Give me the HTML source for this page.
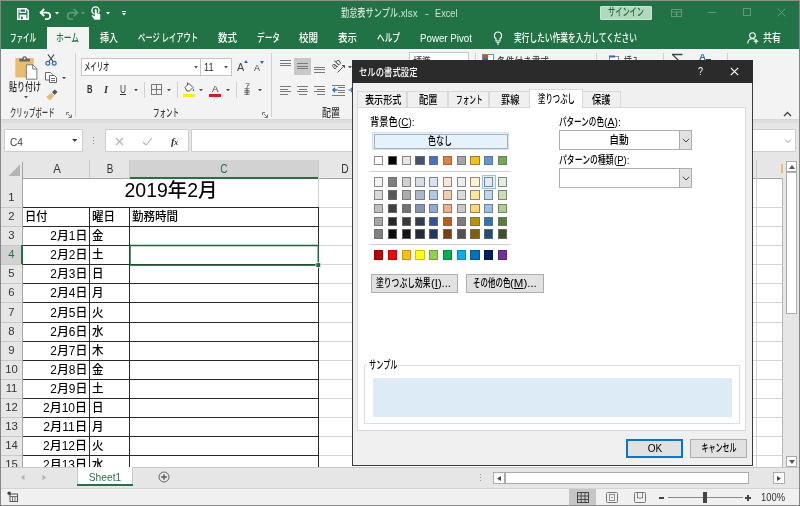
<!DOCTYPE html>
<html lang="ja"><head><meta charset="utf-8"><title>勤怠表サンプル.xlsx - Excel</title>
<style>
html,body{margin:0;padding:0;}
body{width:800px;height:506px;overflow:hidden;position:relative;background:#e6e6e6;font-family:"Liberation Sans","Noto Sans CJK JP",sans-serif;}
#root{position:absolute;left:0;top:0;width:800px;height:506px;overflow:hidden;will-change:transform;}
.b{position:absolute;display:block;margin:0;padding:0;}
.t{position:absolute;white-space:nowrap;display:block;}
.t u{text-decoration:underline;}
</style></head><body><div id="root">
<div class="b " style="left:0px;top:0px;width:800px;height:49px;background:#217346;"></div>
<div class="b " style="left:47px;top:27px;width:42px;height:23px;background:#f3f3f3;"></div>
<div class="b " style="left:0px;top:49px;width:800px;height:71px;background:#f3f3f3;"></div>
<div class="b " style="left:0px;top:119px;width:800px;height:1px;background:#d6d6d6;"></div>
<div class="b " style="left:0px;top:120px;width:800px;height:40px;background:#e6e6e6;"></div>
<div class="b " style="left:0px;top:120px;width:800px;height:3px;background:#dedede;"></div>
<span class="t" id="t1" style="font-size:11px;line-height:15px;color:#cfe0d5;top:6px;font-weight:500;left:341.2px;transform-origin:0 50%;transform:scaleX(0.7434);">勤怠表サンプル</span>
<span class="t" id="t2" style="font-size:10.5px;line-height:14.5px;color:#cfe0d5;top:6.25px;font-weight:500;left:398.3px;transform-origin:0 50%;transform:scaleX(0.9286);">.xlsx</span>
<span class="t" id="t3" style="font-size:10.5px;line-height:14.5px;color:#cfe0d5;top:6.25px;font-weight:500;left:425px;transform-origin:0 50%;transform:scaleX(1.0857);">-</span>
<span class="t" id="t4" style="font-size:10.5px;line-height:14.5px;color:#cfe0d5;top:6.25px;font-weight:500;left:435px;transform-origin:0 50%;transform:scaleX(0.8759);">Excel</span>
<div class="b " style="left:600px;top:5.5px;width:52px;height:14.5px;background:#b2d9c0;border:1px solid #c9e6d3;border-radius:1px;box-sizing:border-box;"></div>
<span class="t" id="t5" style="font-size:11px;line-height:15px;color:#1e6b41;top:5.3px;font-weight:500;left:607.8px;transform-origin:0 50%;transform:scaleX(0.6545);">サインイン</span>
<svg class="b" style="left:670px;top:7.5px;" width="14" height="12" viewBox="0 0 14 12"><rect x="1.5" y="1.5" width="10" height="7" fill="none" stroke="#5d9b79"/><path d="M1.5 4h10M6.5 4v4.5M4.8 6.6l1.7-1.4 1.7 1.4" fill="none" stroke="#5d9b79"/></svg>
<div class="b " style="left:708px;top:12px;width:8px;height:1px;background:#5d9b79;"></div>
<div class="b " style="left:743px;top:8px;width:8px;height:8px;border:1px solid #5d9b79;box-sizing:border-box;"></div>
<svg class="b" style="left:777px;top:8px;" width="9" height="9" viewBox="0 0 9 9"><path d="M0.5 0.5L8.5 8.5M8.5 0.5L0.5 8.5" stroke="#5d9b79" fill="none"/></svg>
<svg class="b" style="left:16.5px;top:7.5px;" width="12" height="12" viewBox="0 0 12 12"><path d="M0.8 0.8h8.4L11.2 2.8V11.2H0.8z" fill="none" stroke="#fff" stroke-width="1.5"/><path d="M3 1v3.3h5.5V1" fill="none" stroke="#fff" stroke-width="1.2"/><rect x="2.6" y="6.6" width="6.8" height="4.6" fill="#fff"/><rect x="4" y="8.6" width="1.8" height="2.6" fill="#217346"/></svg>
<svg class="b" style="left:39px;top:7.5px;" width="14" height="12" viewBox="0 0 14 12"><path d="M5.2 1L1.5 4.6L5.2 8.2M1.8 4.6H8a3.3 3.3 0 0 1 0 6.6H6" fill="none" stroke="#fff" stroke-width="1.8" stroke-linejoin="round"/></svg>
<svg class="b" style="left:54.5px;top:12.25px;" width="4" height="2.5" viewBox="0 0 4 2.5"><path d="M0 0H4 L2 2.5Z" fill="#fff"/></svg>
<svg class="b" style="left:65px;top:7.5px;" width="14" height="12" viewBox="0 0 14 12"><path d="M8.8 1L12.5 4.6L8.8 8.2M12.2 4.6H6a3.3 3.3 0 0 0 0 6.6H8" fill="none" stroke="#5d9b79" stroke-width="1.6" stroke-linejoin="round"/></svg>
<svg class="b" style="left:80.5px;top:12.25px;" width="4" height="2.5" viewBox="0 0 4 2.5"><path d="M0 0H4 L2 2.5Z" fill="#5d9b79"/></svg>
<svg class="b" style="left:90px;top:6px;" width="12" height="15" viewBox="0 0 12 15"><circle cx="5.5" cy="4.5" r="3.6" fill="none" stroke="#fff" stroke-width="1.4"/><path d="M4.5 4v6l-2-1.2-1 1.2 3 4h6v-6l-3.5-1V4a1 1 0 0 0-2.5 0z" fill="#fff" stroke="#217346" stroke-width="0.6"/></svg>
<svg class="b" style="left:105.5px;top:12.25px;" width="4" height="2.5" viewBox="0 0 4 2.5"><path d="M0 0H4 L2 2.5Z" fill="#fff"/></svg>
<div class="b " style="left:122px;top:11px;width:4px;height:1px;background:#fff;"></div>
<svg class="b" style="left:122px;top:13.05px;" width="4" height="2.5" viewBox="0 0 4 2.5"><path d="M0 0H4 L2 2.5Z" fill="#fff"/></svg>
<span class="t" id="t6" style="font-size:11px;line-height:15px;color:#fff;top:31.1px;font-weight:500;left:10px;transform-origin:0 50%;transform:scaleX(0.5909);">ファイル</span>
<span class="t" id="t7" style="font-size:11px;line-height:15px;color:#217346;top:31.1px;font-weight:500;left:56px;transform-origin:0 50%;transform:scaleX(0.7040);">ホーム</span>
<span class="t" id="t8" style="font-size:11px;line-height:15px;color:#fff;top:31.1px;font-weight:500;left:100px;transform-origin:0 50%;transform:scaleX(0.8182);">挿入</span>
<span class="t" id="t9" style="font-size:11px;line-height:15px;color:#fff;top:31.1px;font-weight:500;left:138px;transform-origin:0 50%;transform:scaleX(0.6605);">ページ レイアウト</span>
<span class="t" id="t10" style="font-size:11px;line-height:15px;color:#fff;top:31.1px;font-weight:500;left:218px;transform-origin:0 50%;transform:scaleX(0.8636);">数式</span>
<span class="t" id="t11" style="font-size:11px;line-height:15px;color:#fff;top:31.1px;font-weight:500;left:257px;transform-origin:0 50%;transform:scaleX(0.6970);">データ</span>
<span class="t" id="t12" style="font-size:11px;line-height:15px;color:#fff;top:31.1px;font-weight:500;left:299px;transform-origin:0 50%;transform:scaleX(0.8636);">校閲</span>
<span class="t" id="t13" style="font-size:11px;line-height:15px;color:#fff;top:31.1px;font-weight:500;left:338px;transform-origin:0 50%;transform:scaleX(0.8636);">表示</span>
<span class="t" id="t14" style="font-size:11px;line-height:15px;color:#fff;top:31.1px;font-weight:500;left:377px;transform-origin:0 50%;transform:scaleX(0.6970);">ヘルプ</span>
<span class="t" id="t15" style="font-size:11px;line-height:15px;color:#fff;top:31.1px;font-weight:500;left:420px;transform-origin:0 50%;transform:scaleX(0.8858);">Power Pivot</span>
<span class="t" id="t16" style="font-size:11px;line-height:15px;color:#fff;top:31.1px;font-weight:500;left:514px;transform-origin:0 50%;transform:scaleX(0.7015);">実行したい作業を入力してください</span>
<span class="t" id="t17" style="font-size:11px;line-height:15px;color:#fff;top:31.1px;font-weight:500;left:763px;transform-origin:0 50%;transform:scaleX(0.8182);">共有</span>
<svg class="b" style="left:493px;top:31px;" width="10" height="14" viewBox="0 0 10 14"><path d="M5 1a3.6 3.6 0 0 0-2 6.6V10h4V7.6A3.6 3.6 0 0 0 5 1z" fill="none" stroke="#fff" stroke-width="1.1"/><path d="M3.5 11.5h3M4 13h2" stroke="#fff" stroke-width="1"/></svg>
<svg class="b" style="left:747px;top:32px;" width="12" height="12" viewBox="0 0 12 12"><circle cx="5.5" cy="3.5" r="2.8" fill="none" stroke="#fff" stroke-width="1.1"/><path d="M0.8 11.5c0-3 2-4.8 4.7-4.8 1 0 1.8.2 2.4.6" fill="none" stroke="#fff" stroke-width="1.1"/><path d="M9 7v4.5M6.8 9.2h4.4" stroke="#fff" stroke-width="1.2"/></svg>
<svg class="b" style="left:14px;top:54.5px;" width="25" height="25" viewBox="0 0 25 25"><rect x="1.3" y="3" width="18.5" height="19.5" rx="1" fill="#e9bd6e"/><path d="M5.2 6.6V3.8h3a2.4 2.6 0 0 1 4.8 0h3v2.8z" fill="#666"/><circle cx="10.6" cy="3.4" r="0.9" fill="#f3f3f3"/><path d="M12.3 9.8h6.6l4 4v10.4h-10.6z" fill="#fff" stroke="#7a7a7a" stroke-width="1"/><path d="M18.7 9.8v4.2h4.2" fill="none" stroke="#7a7a7a" stroke-width="1"/></svg>
<span class="t" id="t18" style="font-size:11px;line-height:15px;color:#262626;top:79.5px;font-weight:500;left:8.5px;transform-origin:0 50%;transform:scaleX(0.7273);">貼り付け</span>
<svg class="b" style="left:24px;top:96.25px;" width="4" height="2.5" viewBox="0 0 4 2.5"><path d="M0 0H4 L2 2.5Z" fill="#555"/></svg>
<svg class="b" style="left:45px;top:54px;" width="12" height="12" viewBox="0 0 12 12"><path d="M3 0.5L8.5 8M9 0.5L3.5 8" stroke="#444" stroke-width="1.2" fill="none"/><circle cx="2.8" cy="9.3" r="1.9" fill="none" stroke="#2b6cb8" stroke-width="1.2"/><circle cx="9.2" cy="9.3" r="1.9" fill="none" stroke="#2b6cb8" stroke-width="1.2"/></svg>
<svg class="b" style="left:45px;top:72px;" width="13" height="11" viewBox="0 0 13 11"><path d="M0.5 0.5h5l2 2V8h-7z" fill="#fff" stroke="#666"/><path d="M4.5 3.5h5l2 2v5h-7z" fill="#fff" stroke="#666"/><path d="M6 6.5h4M6 8.5h4" stroke="#2b6cb8" stroke-width="0.9"/></svg>
<svg class="b" style="left:62px;top:76.75px;" width="4" height="2.5" viewBox="0 0 4 2.5"><path d="M0 0H4 L2 2.5Z" fill="#555"/></svg>
<svg class="b" style="left:45px;top:89px;" width="13" height="12" viewBox="0 0 13 12"><path d="M7 3l3-2.5 2.5 2.5-3 3z" fill="#555"/><path d="M1 8l5.5-4.5 3 3L5 11.5z" fill="#e9bd6e"/><path d="M6.5 3.5l3 3" stroke="#fff" stroke-width="0.8"/></svg>
<span class="t" id="t19" style="font-size:11px;line-height:15px;color:#3a3a3a;top:106.3px;font-weight:500;left:9.5px;transform-origin:0 50%;transform:scaleX(0.5779);">クリップボード</span>
<svg class="b" style="left:66px;top:112px;" width="6" height="6" viewBox="0 0 6 6"><path d="M0.5 3V0.5H3M2 2l3 3M5.5 2.5v3h-3" fill="none" stroke="#777" stroke-width="1"/></svg>
<div class="b " style="left:75px;top:53px;width:1px;height:64px;background:#d0d0d0;"></div>
<div class="b " style="left:81px;top:58px;width:120px;height:18px;background:#fff;border:1px solid #c6c6c6;box-sizing:border-box;"></div>
<div class="b " style="left:201px;top:58px;width:31px;height:18px;background:#fff;border:1px solid #c6c6c6;box-sizing:border-box;border-left:none;"></div>
<span class="t" id="t20" style="font-size:11px;line-height:15px;color:#262626;top:59.5px;font-weight:500;left:84px;transform-origin:0 50%;transform:scaleX(0.5795);">メイリオ</span>
<svg class="b" style="left:193.5px;top:66.25px;" width="4" height="2.5" viewBox="0 0 4 2.5"><path d="M0 0H4 L2 2.5Z" fill="#555"/></svg>
<span class="t" id="t21" style="font-size:11px;line-height:15px;color:#262626;top:59.5px;font-weight:500;left:204px;transform-origin:0 50%;transform:scaleX(0.8317);">11</span>
<svg class="b" style="left:224px;top:66.25px;" width="4" height="2.5" viewBox="0 0 4 2.5"><path d="M0 0H4 L2 2.5Z" fill="#555"/></svg>
<span class="t" id="t22" style="font-size:10.5px;line-height:14.5px;color:#444;top:60.25px;font-weight:500;left:236.5px;transform-origin:0 50%;transform:scaleX(1.0263);">A</span>
<svg class="b" style="left:244px;top:60px;" width="4" height="3" viewBox="0 0 4 3"><path d="M0 3L2 0L4 3z" fill="#2b6cb8"/></svg>
<span class="t" id="t23" style="font-size:8.8px;line-height:12.8px;color:#444;top:61.8px;font-weight:500;left:254px;transform-origin:0 50%;transform:scaleX(1.0213);">A</span>
<svg class="b" style="left:260px;top:61px;" width="4" height="3" viewBox="0 0 4 3"><path d="M0 0L2 3L4 0z" fill="#2b6cb8"/></svg>
<span class="t" id="t24" style="font-size:10px;line-height:14px;color:#333;top:82.6px;font-weight:bold;left:86.8px;transform-origin:0 50%;transform:scaleX(0.7603);">B</span>
<span class="t" id="t25" style="font-size:10px;line-height:14px;color:#333;top:82.6px;font-weight:bold;left:103.5px;transform-origin:0 50%;transform:scaleX(1.0240);font-style:italic;font-family:'Liberation Serif',serif;">I</span>
<span class="t" id="t26" style="font-size:10px;line-height:14px;color:#333;top:82.6px;font-weight:normal;left:120.2px;transform-origin:0 50%;transform:scaleX(0.8294);text-decoration:underline;">U</span>
<svg class="b" style="left:133.5px;top:88.75px;" width="4" height="2.5" viewBox="0 0 4 2.5"><path d="M0 0H4 L2 2.5Z" fill="#555"/></svg>
<div class="b " style="left:144px;top:82px;width:1px;height:16px;background:#d0d0d0;"></div>
<svg class="b" style="left:150.5px;top:84px;" width="11" height="11" viewBox="0 0 11 11"><rect x="0.5" y="0.5" width="10" height="10" fill="none" stroke="#7a7a7a"/><path d="M5.5 0.5v10M0.5 5.5h10" stroke="#7a7a7a"/></svg>
<svg class="b" style="left:167px;top:88.75px;" width="4" height="2.5" viewBox="0 0 4 2.5"><path d="M0 0H4 L2 2.5Z" fill="#555"/></svg>
<div class="b " style="left:177px;top:82px;width:1px;height:16px;background:#d0d0d0;"></div>
<svg class="b" style="left:183px;top:82px;" width="12" height="11" viewBox="0 0 12 11"><path d="M2 5.5L6 1.5l4 4-3.5 3.5H4z" fill="#fff" stroke="#555" stroke-width="1"/><path d="M4.5 3L4.5 0.5" stroke="#555"/><path d="M10.5 6.5c1 1.4 1 2.3 0 2.8-1-.5-1-1.4 0-2.8z" fill="#2b6cb8"/></svg>
<div class="b " style="left:183px;top:94px;width:12px;height:3px;background:#ffee00;"></div>
<svg class="b" style="left:199px;top:88.75px;" width="4" height="2.5" viewBox="0 0 4 2.5"><path d="M0 0H4 L2 2.5Z" fill="#555"/></svg>
<span class="t" id="t27" style="font-size:9.5px;line-height:13.5px;color:#444;top:81.85px;font-weight:500;left:211.8px;transform-origin:0 50%;transform:scaleX(1.0246);">A</span>
<div class="b " style="left:209px;top:94px;width:12px;height:3px;background:#e81123;"></div>
<svg class="b" style="left:226px;top:88.75px;" width="4" height="2.5" viewBox="0 0 4 2.5"><path d="M0 0H4 L2 2.5Z" fill="#555"/></svg>
<div class="b " style="left:236px;top:82px;width:1px;height:16px;background:#d0d0d0;"></div>
<span class="t" id="t28" style="font-size:5.5px;line-height:9.5px;color:#444;top:81.75px;font-weight:500;left:244.5px;transform-origin:0 50%;transform:scaleX(0.9065);">ア</span>
<span class="t" id="t29" style="font-size:6.5px;line-height:10.5px;color:#444;top:87.25px;font-weight:500;left:244px;transform-origin:0 50%;transform:scaleX(0.9231);">亜</span>
<svg class="b" style="left:258px;top:88.75px;" width="4" height="2.5" viewBox="0 0 4 2.5"><path d="M0 0H4 L2 2.5Z" fill="#555"/></svg>
<span class="t" id="t30" style="font-size:11px;line-height:15px;color:#3a3a3a;top:106.3px;font-weight:500;left:153px;transform-origin:0 50%;transform:scaleX(0.5909);">フォント</span>
<svg class="b" style="left:262px;top:112px;" width="6" height="6" viewBox="0 0 6 6"><path d="M0.5 3V0.5H3M2 2l3 3M5.5 2.5v3h-3" fill="none" stroke="#777" stroke-width="1"/></svg>
<div class="b " style="left:271px;top:53px;width:1px;height:64px;background:#d0d0d0;"></div>
<div class="b " style="left:280px;top:60px;width:11px;height:1px;background:#7a7a7a;"></div>
<div class="b " style="left:280px;top:62.6px;width:11px;height:1px;background:#7a7a7a;"></div>
<div class="b " style="left:280px;top:65.2px;width:11px;height:1px;background:#7a7a7a;"></div>
<div class="b " style="left:294px;top:58px;width:17px;height:17px;background:#c8c8c8;"></div>
<div class="b " style="left:297px;top:63.3px;width:11px;height:1px;background:#7a7a7a;"></div>
<div class="b " style="left:297px;top:65.8px;width:11px;height:1px;background:#7a7a7a;"></div>
<div class="b " style="left:297px;top:68.3px;width:11px;height:1px;background:#7a7a7a;"></div>
<div class="b " style="left:314px;top:66.7px;width:11px;height:1px;background:#7a7a7a;"></div>
<div class="b " style="left:314px;top:69.3px;width:11px;height:1px;background:#7a7a7a;"></div>
<div class="b " style="left:314px;top:71.9px;width:11px;height:1px;background:#7a7a7a;"></div>
<span class="t" style="left:331px;top:57.5px;font-size:9px;line-height:12px;color:#333;transform:rotate(-45deg);transform-origin:50% 50%;">ab</span>
<svg class="b" style="left:336.5px;top:63.5px;" width="9" height="9" viewBox="0 0 9 9"><path d="M0.5 8.5L7.5 1.5M7.5 1.5H5M7.5 1.5V4" stroke="#555" fill="none"/></svg>
<svg class="b" style="left:347.5px;top:65.75px;" width="4" height="2.5" viewBox="0 0 4 2.5"><path d="M0 0H4 L2 2.5Z" fill="#555"/></svg>
<div class="b " style="left:280px;top:86px;width:11px;height:1px;background:#7a7a7a;"></div>
<div class="b " style="left:280px;top:88.5px;width:8px;height:1px;background:#7a7a7a;"></div>
<div class="b " style="left:280px;top:91px;width:11px;height:1px;background:#7a7a7a;"></div>
<div class="b " style="left:280px;top:93.5px;width:8px;height:1px;background:#7a7a7a;"></div>
<div class="b " style="left:297px;top:86px;width:11px;height:1px;background:#7a7a7a;"></div>
<div class="b " style="left:298.5px;top:88.5px;width:8px;height:1px;background:#7a7a7a;"></div>
<div class="b " style="left:297px;top:91px;width:11px;height:1px;background:#7a7a7a;"></div>
<div class="b " style="left:298.5px;top:93.5px;width:8px;height:1px;background:#7a7a7a;"></div>
<div class="b " style="left:314px;top:86px;width:11px;height:1px;background:#7a7a7a;"></div>
<div class="b " style="left:317px;top:88.5px;width:8px;height:1px;background:#7a7a7a;"></div>
<div class="b " style="left:314px;top:91px;width:11px;height:1px;background:#7a7a7a;"></div>
<div class="b " style="left:317px;top:93.5px;width:8px;height:1px;background:#7a7a7a;"></div>
<div class="b " style="left:332px;top:84.5px;width:13px;height:1px;background:#7a7a7a;"></div>
<div class="b " style="left:338px;top:87.1px;width:7px;height:1px;background:#7a7a7a;"></div>
<div class="b " style="left:338px;top:89.7px;width:7px;height:1px;background:#7a7a7a;"></div>
<div class="b " style="left:338px;top:92.3px;width:7px;height:1px;background:#7a7a7a;"></div>
<div class="b " style="left:332px;top:94.9px;width:13px;height:1px;background:#7a7a7a;"></div>
<svg class="b" style="left:332px;top:87px;" width="6" height="6" viewBox="0 0 6 6"><path d="M5.5 3H1M3 0.8L0.8 3l2.2 2.2" stroke="#2b6cb8" stroke-width="1.3" fill="none"/></svg>
<svg class="b" style="left:348px;top:87px;" width="6" height="6" viewBox="0 0 6 6"><path d="M0.5 3H5M3 1l2 2-2 2" stroke="#2b6cb8" stroke-width="1.2" fill="none"/></svg>
<span class="t" id="t31" style="font-size:11px;line-height:15px;color:#3a3a3a;top:106.3px;font-weight:500;left:322px;transform-origin:0 50%;transform:scaleX(0.8182);">配置</span>
<div class="b " style="left:409px;top:52px;width:60px;height:12px;background:#fff;border:1px solid #c6c6c6;box-sizing:border-box;"></div>
<span class="t" id="t32" style="font-size:11px;line-height:15px;color:#444;top:54.5px;font-weight:500;left:413px;transform-origin:0 50%;transform:scaleX(0.8182);">標準</span>
<div class="b " style="left:475px;top:53px;width:1px;height:11px;background:#d0d0d0;"></div>
<svg class="b" style="left:482px;top:54px;" width="12" height="8" viewBox="0 0 12 8"><rect x="0.5" y="0.5" width="11" height="9" fill="#fff" stroke="#888"/><rect x="1" y="1" width="5" height="3" fill="#d9482b"/><rect x="1" y="4" width="5" height="4" fill="#2b6cb8"/></svg>
<span class="t" id="t33" style="font-size:11px;line-height:15px;color:#444;top:54.5px;font-weight:500;left:497px;transform-origin:0 50%;transform:scaleX(0.7879);">条件付き書式</span>
<div class="b " style="left:596px;top:53px;width:1px;height:11px;background:#d0d0d0;"></div>
<svg class="b" style="left:609px;top:54px;" width="12" height="8" viewBox="0 0 12 8"><rect x="0.5" y="2.5" width="9" height="8" fill="#fff" stroke="#888"/><path d="M0 2.5h6" stroke="#2b6cb8" stroke-width="2"/></svg>
<span class="t" id="t34" style="font-size:11px;line-height:15px;color:#444;top:54.5px;font-weight:500;left:624px;transform-origin:0 50%;transform:scaleX(0.7273);">挿入</span>
<div class="b " style="left:663px;top:53px;width:1px;height:11px;background:#d0d0d0;"></div>
<svg class="b" style="left:671px;top:53px;" width="13" height="8" viewBox="0 0 13 8"><path d="M1 1.5h10.5M1.5 1.5L9 9" stroke="#444" stroke-width="1.3" fill="none"/></svg>
<span class="t" id="t35" style="font-size:9px;line-height:13px;color:#2b6cb8;top:51px;font-weight:bold;left:699px;transform-origin:0 50%;transform:scaleX(1.0769);">A</span>
<div class="b " style="left:706px;top:59px;width:5px;height:1px;background:#444;"></div>
<div class="b " style="left:727px;top:53px;width:1px;height:11px;background:#d0d0d0;"></div>
<svg class="b" style="left:783px;top:111px;" width="9" height="6" viewBox="0 0 9 6"><path d="M1 5L4.5 1.5L8 5" stroke="#444" stroke-width="1.4" fill="none"/></svg>
<div class="b " style="left:4px;top:129px;width:78.5px;height:23.4px;background:#fff;border:1px solid #cdcdcd;box-sizing:border-box;border-radius:1px;"></div>
<span class="t" id="t36" style="font-size:10.5px;line-height:14.5px;color:#444;top:135.05px;font-weight:500;left:10px;transform-origin:0 50%;transform:scaleX(0.9674);">C4</span>
<svg class="b" style="left:71.7px;top:138.8px;" width="5.4" height="3" viewBox="0 0 5.4 3"><path d="M0 0H5.4 L2.7 3Z" fill="#444"/></svg>
<div class="b " style="left:93.3px;top:137px;width:1px;height:1px;background:#8a8a8a;"></div>
<div class="b " style="left:93.3px;top:140px;width:1px;height:1px;background:#8a8a8a;"></div>
<div class="b " style="left:93.3px;top:143px;width:1px;height:1px;background:#8a8a8a;"></div>
<div class="b " style="left:105.3px;top:129px;width:83.7px;height:23.4px;background:#fff;border:1px solid #cdcdcd;box-sizing:border-box;border-radius:1px;"></div>
<svg class="b" style="left:115px;top:137px;" width="9" height="9" viewBox="0 0 9 9"><path d="M1 1L8 8M8 1L1 8" stroke="#b0b0b0" stroke-width="1.1" fill="none"/></svg>
<svg class="b" style="left:142px;top:137px;" width="11" height="9" viewBox="0 0 11 9"><path d="M1 5L4 8L10 1" stroke="#b0b0b0" stroke-width="1.1" fill="none"/></svg>
<span class="t" id="t37" style="font-size:11px;line-height:15px;color:#333;top:133.5px;font-weight:bold;left:171px;transform-origin:0 50%;transform:scaleX(0.9804);font-style:italic;font-family:'Liberation Serif',serif;">f</span>
<span class="t" id="t38" style="font-size:8px;line-height:12px;color:#333;top:136.8px;font-weight:bold;left:174.3px;transform-origin:0 50%;font-style:italic;font-family:'Liberation Serif',serif;">x</span>
<div class="b " style="left:191px;top:129px;width:604.5px;height:23.4px;background:#fff;border:1px solid #cdcdcd;box-sizing:border-box;border-radius:1px;"></div>
<svg class="b" style="left:784px;top:138px;" width="8" height="6" viewBox="0 0 8 6"><path d="M1 1.5L4 4.5L7 1.5" stroke="#999" stroke-width="1" fill="none"/></svg>
<div class="b " style="left:0px;top:160px;width:783px;height:307px;background:#fff;"></div>
<div class="b " style="left:0px;top:160px;width:800px;height:18px;background:#e6e6e6;"></div>
<div class="b " style="left:0px;top:178px;width:783px;height:1px;background:#a6a6a6;"></div>
<div class="b " style="left:0px;top:160px;width:22px;height:307px;background:#e6e6e6;"></div>
<div class="b " style="left:22px;top:162px;width:1px;height:305px;background:#a6a6a6;"></div>
<svg class="b" style="left:7.5px;top:163.5px;" width="12.5" height="12.5" viewBox="0 0 12.5 12.5"><path d="M12.5 0V12.5H0z" fill="#b4b4b4"/></svg>
<div class="b " style="left:130px;top:160px;width:188px;height:18px;background:#d2d2d2;"></div>
<div class="b " style="left:130px;top:177.3px;width:188px;height:1.7px;background:#217346;"></div>
<div class="b " style="left:89px;top:160px;width:1px;height:18px;background:#c8c8c8;"></div>
<div class="b " style="left:129px;top:160px;width:1px;height:18px;background:#c8c8c8;"></div>
<div class="b " style="left:318px;top:160px;width:1px;height:18px;background:#c8c8c8;"></div>
<div class="b " style="left:756px;top:160px;width:1px;height:18px;background:#c8c8c8;"></div>
<span class="t" id="t39" style="font-size:12px;line-height:16px;color:#333;top:160.8px;font-weight:500;left:56.8px;transform-origin:0 50%;transform:translateX(-50%) scaleX(0.9481);transform-origin:50% 50%;">A</span>
<span class="t" id="t40" style="font-size:12px;line-height:16px;color:#333;top:160.8px;font-weight:500;left:109.5px;transform-origin:0 50%;transform:translateX(-50%) scaleX(0.8234);transform-origin:50% 50%;">B</span>
<span class="t" id="t41" style="font-size:12px;line-height:16px;color:#217346;top:160.8px;font-weight:500;left:224px;transform-origin:0 50%;transform:translateX(-50%) scaleX(0.8533);transform-origin:50% 50%;">C</span>
<span class="t" id="t42" style="font-size:12px;line-height:16px;color:#333;top:160.8px;font-weight:500;left:345px;transform-origin:0 50%;transform:translateX(-50%) scaleX(0.8533);transform-origin:50% 50%;">D</span>
<div class="b " style="left:23px;top:207px;width:759px;height:1px;background:#d4d4d4;"></div>
<div class="b " style="left:23px;top:226px;width:759px;height:1px;background:#d4d4d4;"></div>
<div class="b " style="left:23px;top:245px;width:759px;height:1px;background:#d4d4d4;"></div>
<div class="b " style="left:23px;top:264px;width:759px;height:1px;background:#d4d4d4;"></div>
<div class="b " style="left:23px;top:283px;width:759px;height:1px;background:#d4d4d4;"></div>
<div class="b " style="left:23px;top:302px;width:759px;height:1px;background:#d4d4d4;"></div>
<div class="b " style="left:23px;top:322px;width:759px;height:1px;background:#d4d4d4;"></div>
<div class="b " style="left:23px;top:341px;width:759px;height:1px;background:#d4d4d4;"></div>
<div class="b " style="left:23px;top:360px;width:759px;height:1px;background:#d4d4d4;"></div>
<div class="b " style="left:23px;top:379px;width:759px;height:1px;background:#d4d4d4;"></div>
<div class="b " style="left:23px;top:398px;width:759px;height:1px;background:#d4d4d4;"></div>
<div class="b " style="left:23px;top:417px;width:759px;height:1px;background:#d4d4d4;"></div>
<div class="b " style="left:23px;top:436px;width:759px;height:1px;background:#d4d4d4;"></div>
<div class="b " style="left:23px;top:455px;width:759px;height:1px;background:#d4d4d4;"></div>
<div class="b " style="left:318px;top:178px;width:1px;height:289px;background:#d4d4d4;"></div>
<div class="b " style="left:756px;top:178px;width:1px;height:289px;background:#d4d4d4;"></div>
<div class="b " style="left:0px;top:207px;width:22px;height:1px;background:#c8c8c8;"></div>
<span class="t" id="t43" style="font-size:11.3px;line-height:15.3px;color:#333;top:189.85px;font-weight:500;left:11.5px;transform-origin:0 50%;transform:translateX(-50%);">1</span>
<div class="b " style="left:0px;top:226px;width:22px;height:1px;background:#c8c8c8;"></div>
<span class="t" id="t44" style="font-size:11.3px;line-height:15.3px;color:#333;top:209.35px;font-weight:500;left:11.5px;transform-origin:0 50%;transform:translateX(-50%);">2</span>
<div class="b " style="left:0px;top:245px;width:22px;height:1px;background:#c8c8c8;"></div>
<span class="t" id="t45" style="font-size:11.3px;line-height:15.3px;color:#333;top:228.35px;font-weight:500;left:11.5px;transform-origin:0 50%;transform:translateX(-50%);">3</span>
<div class="b " style="left:0px;top:246px;width:22px;height:18px;background:#d2d2d2;"></div>
<div class="b " style="left:21px;top:245px;width:2px;height:20px;background:#217346;"></div>
<div class="b " style="left:0px;top:264px;width:22px;height:1px;background:#c8c8c8;"></div>
<span class="t" id="t46" style="font-size:11.3px;line-height:15.3px;color:#217346;top:247.35px;font-weight:500;left:11.5px;transform-origin:0 50%;transform:translateX(-50%);">4</span>
<div class="b " style="left:0px;top:283px;width:22px;height:1px;background:#c8c8c8;"></div>
<span class="t" id="t47" style="font-size:11.3px;line-height:15.3px;color:#333;top:266.35px;font-weight:500;left:11.5px;transform-origin:0 50%;transform:translateX(-50%);">5</span>
<div class="b " style="left:0px;top:302px;width:22px;height:1px;background:#c8c8c8;"></div>
<span class="t" id="t48" style="font-size:11.3px;line-height:15.3px;color:#333;top:285.35px;font-weight:500;left:11.5px;transform-origin:0 50%;transform:translateX(-50%);">6</span>
<div class="b " style="left:0px;top:322px;width:22px;height:1px;background:#c8c8c8;"></div>
<span class="t" id="t49" style="font-size:11.3px;line-height:15.3px;color:#333;top:305.35px;font-weight:500;left:11.5px;transform-origin:0 50%;transform:translateX(-50%);">7</span>
<div class="b " style="left:0px;top:341px;width:22px;height:1px;background:#c8c8c8;"></div>
<span class="t" id="t50" style="font-size:11.3px;line-height:15.3px;color:#333;top:324.35px;font-weight:500;left:11.5px;transform-origin:0 50%;transform:translateX(-50%);">8</span>
<div class="b " style="left:0px;top:360px;width:22px;height:1px;background:#c8c8c8;"></div>
<span class="t" id="t51" style="font-size:11.3px;line-height:15.3px;color:#333;top:343.35px;font-weight:500;left:11.5px;transform-origin:0 50%;transform:translateX(-50%);">9</span>
<div class="b " style="left:0px;top:379px;width:22px;height:1px;background:#c8c8c8;"></div>
<span class="t" id="t52" style="font-size:11.3px;line-height:15.3px;color:#333;top:362.35px;font-weight:500;left:11.5px;transform-origin:0 50%;transform:translateX(-50%);">10</span>
<div class="b " style="left:0px;top:398px;width:22px;height:1px;background:#c8c8c8;"></div>
<span class="t" id="t53" style="font-size:11.3px;line-height:15.3px;color:#333;top:381.35px;font-weight:500;left:11.5px;transform-origin:0 50%;transform:translateX(-50%);">11</span>
<div class="b " style="left:0px;top:417px;width:22px;height:1px;background:#c8c8c8;"></div>
<span class="t" id="t54" style="font-size:11.3px;line-height:15.3px;color:#333;top:400.35px;font-weight:500;left:11.5px;transform-origin:0 50%;transform:translateX(-50%);">12</span>
<div class="b " style="left:0px;top:436px;width:22px;height:1px;background:#c8c8c8;"></div>
<span class="t" id="t55" style="font-size:11.3px;line-height:15.3px;color:#333;top:419.35px;font-weight:500;left:11.5px;transform-origin:0 50%;transform:translateX(-50%);">13</span>
<div class="b " style="left:0px;top:455px;width:22px;height:1px;background:#c8c8c8;"></div>
<span class="t" id="t56" style="font-size:11.3px;line-height:15.3px;color:#333;top:438.35px;font-weight:500;left:11.5px;transform-origin:0 50%;transform:translateX(-50%);">14</span>
<div class="b " style="left:0px;top:474px;width:22px;height:1px;background:#c8c8c8;"></div>
<span class="t" id="t57" style="font-size:11.3px;line-height:15.3px;color:#333;top:457.35px;font-weight:500;left:11.5px;transform-origin:0 50%;transform:translateX(-50%);">15</span>
<div class="b " style="left:23px;top:207px;width:296px;height:1px;background:#2a2a2a;"></div>
<div class="b " style="left:23px;top:226px;width:296px;height:1px;background:#2a2a2a;"></div>
<div class="b " style="left:23px;top:245px;width:296px;height:1px;background:#2a2a2a;"></div>
<div class="b " style="left:23px;top:264px;width:296px;height:1px;background:#2a2a2a;"></div>
<div class="b " style="left:23px;top:283px;width:296px;height:1px;background:#2a2a2a;"></div>
<div class="b " style="left:23px;top:302px;width:296px;height:1px;background:#2a2a2a;"></div>
<div class="b " style="left:23px;top:322px;width:296px;height:1px;background:#2a2a2a;"></div>
<div class="b " style="left:23px;top:341px;width:296px;height:1px;background:#2a2a2a;"></div>
<div class="b " style="left:23px;top:360px;width:296px;height:1px;background:#2a2a2a;"></div>
<div class="b " style="left:23px;top:379px;width:296px;height:1px;background:#2a2a2a;"></div>
<div class="b " style="left:23px;top:398px;width:296px;height:1px;background:#2a2a2a;"></div>
<div class="b " style="left:23px;top:417px;width:296px;height:1px;background:#2a2a2a;"></div>
<div class="b " style="left:23px;top:436px;width:296px;height:1px;background:#2a2a2a;"></div>
<div class="b " style="left:23px;top:455px;width:296px;height:1px;background:#2a2a2a;"></div>
<div class="b " style="left:89px;top:207px;width:1px;height:260px;background:#2a2a2a;"></div>
<div class="b " style="left:129px;top:207px;width:1px;height:260px;background:#2a2a2a;"></div>
<div class="b " style="left:318px;top:207px;width:1px;height:260px;background:#2a2a2a;"></div>
<span class="t" id="t58" style="font-size:19.5px;line-height:23.5px;color:#000;top:179.25px;font-weight:500;left:170.5px;transform-origin:0 50%;transform:translateX(-50%) scaleX(0.9975);transform-origin:50% 50%;">2019年2月</span>
<span class="t" id="t59" style="font-size:12px;line-height:16px;color:#000;top:209px;font-weight:500;left:24.6px;transform-origin:0 50%;transform:scaleX(0.9369);">日付</span>
<span class="t" id="t60" style="font-size:12px;line-height:16px;color:#000;top:209px;font-weight:500;left:92px;transform-origin:0 50%;transform:scaleX(0.9577);">曜日</span>
<span class="t" id="t61" style="font-size:12px;line-height:16px;color:#000;top:209px;font-weight:500;left:132px;transform-origin:0 50%;transform:scaleX(0.9580);">勤務時間</span>
<span class="t" id="d1" style="font-size:12px;line-height:16px;color:#000;top:228px;font-weight:500;right:712.5px;transform-origin:100% 50%;transform:scaleX(0.9904);">2月1日</span>
<span class="t" id="w1" style="font-size:12px;line-height:16px;color:#000;top:228px;font-weight:500;left:92px;transform-origin:0 50%;transform:scaleX(0.9571);">金</span>
<span class="t" id="d2" style="font-size:12px;line-height:16px;color:#000;top:247px;font-weight:500;right:712.5px;transform-origin:100% 50%;transform:scaleX(0.9904);">2月2日</span>
<span class="t" id="w2" style="font-size:12px;line-height:16px;color:#000;top:247px;font-weight:500;left:92px;transform-origin:0 50%;transform:scaleX(0.9571);">土</span>
<span class="t" id="d3" style="font-size:12px;line-height:16px;color:#000;top:266px;font-weight:500;right:712.5px;transform-origin:100% 50%;transform:scaleX(0.9904);">2月3日</span>
<span class="t" id="w3" style="font-size:12px;line-height:16px;color:#000;top:266px;font-weight:500;left:92px;transform-origin:0 50%;transform:scaleX(0.9571);">日</span>
<span class="t" id="d4" style="font-size:12px;line-height:16px;color:#000;top:285px;font-weight:500;right:712.5px;transform-origin:100% 50%;transform:scaleX(0.9904);">2月4日</span>
<span class="t" id="w4" style="font-size:12px;line-height:16px;color:#000;top:285px;font-weight:500;left:92px;transform-origin:0 50%;transform:scaleX(0.9571);">月</span>
<span class="t" id="d5" style="font-size:12px;line-height:16px;color:#000;top:304.5px;font-weight:500;right:712.5px;transform-origin:100% 50%;transform:scaleX(0.9904);">2月5日</span>
<span class="t" id="w5" style="font-size:12px;line-height:16px;color:#000;top:304.5px;font-weight:500;left:92px;transform-origin:0 50%;transform:scaleX(0.9571);">火</span>
<span class="t" id="d6" style="font-size:12px;line-height:16px;color:#000;top:324px;font-weight:500;right:712.5px;transform-origin:100% 50%;transform:scaleX(0.9904);">2月6日</span>
<span class="t" id="w6" style="font-size:12px;line-height:16px;color:#000;top:324px;font-weight:500;left:92px;transform-origin:0 50%;transform:scaleX(0.9571);">水</span>
<span class="t" id="d7" style="font-size:12px;line-height:16px;color:#000;top:343px;font-weight:500;right:712.5px;transform-origin:100% 50%;transform:scaleX(0.9904);">2月7日</span>
<span class="t" id="w7" style="font-size:12px;line-height:16px;color:#000;top:343px;font-weight:500;left:92px;transform-origin:0 50%;transform:scaleX(0.9571);">木</span>
<span class="t" id="d8" style="font-size:12px;line-height:16px;color:#000;top:362px;font-weight:500;right:712.5px;transform-origin:100% 50%;transform:scaleX(0.9904);">2月8日</span>
<span class="t" id="w8" style="font-size:12px;line-height:16px;color:#000;top:362px;font-weight:500;left:92px;transform-origin:0 50%;transform:scaleX(0.9571);">金</span>
<span class="t" id="d9" style="font-size:12px;line-height:16px;color:#000;top:381px;font-weight:500;right:712.5px;transform-origin:100% 50%;transform:scaleX(0.9904);">2月9日</span>
<span class="t" id="w9" style="font-size:12px;line-height:16px;color:#000;top:381px;font-weight:500;left:92px;transform-origin:0 50%;transform:scaleX(0.9571);">土</span>
<span class="t" id="d10" style="font-size:12px;line-height:16px;color:#000;top:400px;font-weight:500;right:712.5px;transform-origin:100% 50%;transform:scaleX(0.9993);">2月10日</span>
<span class="t" id="w10" style="font-size:12px;line-height:16px;color:#000;top:400px;font-weight:500;left:92px;transform-origin:0 50%;transform:scaleX(0.9571);">日</span>
<span class="t" id="d11" style="font-size:12px;line-height:16px;color:#000;top:419px;font-weight:500;right:712.5px;transform-origin:100% 50%;transform:scaleX(1.0199);">2月11日</span>
<span class="t" id="w11" style="font-size:12px;line-height:16px;color:#000;top:419px;font-weight:500;left:92px;transform-origin:0 50%;transform:scaleX(0.9571);">月</span>
<span class="t" id="d12" style="font-size:12px;line-height:16px;color:#000;top:438px;font-weight:500;right:712.5px;transform-origin:100% 50%;transform:scaleX(0.9993);">2月12日</span>
<span class="t" id="w12" style="font-size:12px;line-height:16px;color:#000;top:438px;font-weight:500;left:92px;transform-origin:0 50%;transform:scaleX(0.9571);">火</span>
<span class="t" id="d13" style="font-size:12px;line-height:16px;color:#000;top:457px;font-weight:500;right:712.5px;transform-origin:100% 50%;transform:scaleX(0.9993);">2月13日</span>
<span class="t" id="w13" style="font-size:12px;line-height:16px;color:#000;top:457px;font-weight:500;left:92px;transform-origin:0 50%;transform:scaleX(0.9571);">水</span>
<svg class="b" style="left:126px;top:242px;" width="198" height="28" viewBox="0 0 198 28"><rect x="4" y="3.5" width="188.3" height="19.6" fill="none" stroke="#17663a" stroke-width="1.5"/><rect x="189.6" y="20.4" width="5.4" height="5.4" fill="#fff"/><rect x="190.3" y="21.1" width="4" height="4" fill="#1c6e3f"/></svg>
<div class="b " style="left:783px;top:160px;width:17px;height:307px;background:#e6e6e6;"></div>
<div class="b " style="left:782px;top:178px;width:1px;height:289px;background:#b4b4b4;"></div>
<div class="b " style="left:781px;top:164px;width:2px;height:9px;background:#f0b87a;"></div>
<div class="b " style="left:786px;top:161px;width:11px;height:11px;background:#fff;border:1px solid #ababab;box-sizing:border-box;"></div>
<svg class="b" style="left:788.5px;top:164.5px;" width="6" height="4" viewBox="0 0 6 4"><path d="M0 4L3 0L6 4z" fill="#555"/></svg>
<div class="b " style="left:786px;top:172px;width:11px;height:142px;background:#fff;border:1px solid #ababab;box-sizing:border-box;"></div>
<div class="b " style="left:786px;top:456px;width:11px;height:11px;background:#fff;border:1px solid #ababab;box-sizing:border-box;"></div>
<svg class="b" style="left:788.5px;top:460px;" width="6" height="4" viewBox="0 0 6 4"><path d="M0 0L3 4L6 0z" fill="#555"/></svg>
<div class="b " style="left:0px;top:467px;width:800px;height:21px;background:#e6e6e6;"></div>
<div class="b " style="left:0px;top:467px;width:800px;height:1px;background:#c8c8c8;"></div>
<svg class="b" style="left:20px;top:474px;" width="5" height="7" viewBox="0 0 5 7"><path d="M4.5 0.5L1 3.5l3.5 3z" fill="#b5b5b5"/></svg>
<svg class="b" style="left:42px;top:474px;" width="5" height="7" viewBox="0 0 5 7"><path d="M0.5 0.5L4 3.5l-3.5 3z" fill="#b5b5b5"/></svg>
<div class="b " style="left:77px;top:467px;width:56px;height:19px;background:#fff;border-left:1px solid #c8c8c8;border-right:1px solid #c8c8c8;box-sizing:border-box;"></div>
<div class="b " style="left:77px;top:484px;width:56px;height:2px;background:#217346;"></div>
<span class="t" id="t88" style="font-size:10.5px;line-height:14.5px;color:#217346;top:469.95px;font-weight:500;left:105px;transform-origin:0 50%;transform:translateX(-50%) scaleX(0.9765);transform-origin:50% 50%;">Sheet1</span>
<svg class="b" style="left:158px;top:471.3px;" width="12" height="12" viewBox="0 0 12 12"><circle cx="6" cy="6" r="5" fill="none" stroke="#666" stroke-width="1"/><path d="M6 3.2v5.6M3.2 6h5.6" stroke="#555" stroke-width="1.3"/></svg>
<div class="b " style="left:480px;top:474px;width:1px;height:1px;background:#9a9a9a;"></div>
<div class="b " style="left:480px;top:477px;width:1px;height:1px;background:#9a9a9a;"></div>
<div class="b " style="left:480px;top:480px;width:1px;height:1px;background:#9a9a9a;"></div>
<div class="b " style="left:493px;top:472px;width:12px;height:12px;background:#fff;border:1px solid #ababab;box-sizing:border-box;"></div>
<svg class="b" style="left:497px;top:475.5px;" width="4" height="5" viewBox="0 0 4 5"><path d="M4 0L0 2.5L4 5z" fill="#444"/></svg>
<div class="b " style="left:505px;top:472px;width:243.5px;height:12px;background:#fff;border:1px solid #ababab;box-sizing:border-box;"></div>
<div class="b " style="left:773px;top:472px;width:12px;height:12px;background:#fff;border:1px solid #ababab;box-sizing:border-box;"></div>
<svg class="b" style="left:777px;top:475.5px;" width="4" height="5" viewBox="0 0 4 5"><path d="M0 0L4 2.5L0 5z" fill="#444"/></svg>
<div class="b " style="left:0px;top:488px;width:800px;height:18px;background:#f0f0f0;"></div>
<div class="b " style="left:0px;top:488px;width:800px;height:1px;background:#d4d4d4;"></div>
<div class="b " style="left:0px;top:505px;width:800px;height:1px;background:#8c8c8c;"></div>
<svg class="b" style="left:7px;top:491px;" width="11" height="11" viewBox="0 0 11 11"><rect x="3" y="3" width="7.5" height="7.5" fill="none" stroke="#555"/><path d="M3 5.5h7.5M5.5 5.5v5M8 5.5v5" stroke="#555" stroke-width="0.8"/><circle cx="2.2" cy="2.2" r="1.8" fill="#444"/></svg>
<div class="b " style="left:569px;top:489px;width:27px;height:16px;background:#c6c6c6;"></div>
<svg class="b" style="left:576.5px;top:491.5px;" width="12" height="11" viewBox="0 0 12 11"><rect x="0.5" y="0.5" width="11" height="10" fill="none" stroke="#444"/><path d="M0.5 4h11M0.5 7.5h11M4.2 0.5v10M8 0.5v10" stroke="#444" stroke-width="0.9"/></svg>
<svg class="b" style="left:605.5px;top:491.5px;" width="12" height="11" viewBox="0 0 12 11"><rect x="0.5" y="0.5" width="11" height="10" rx="1" fill="none" stroke="#777"/><rect x="3.5" y="2.5" width="5" height="6" fill="none" stroke="#888" stroke-width="0.9"/><path d="M5 5.5h2" stroke="#888" stroke-width="0.8"/></svg>
<svg class="b" style="left:634px;top:491.5px;" width="12" height="11" viewBox="0 0 12 11"><rect x="0.5" y="0.5" width="11" height="10" rx="1" fill="none" stroke="#777"/><path d="M3.5 0.5v5.5h5v-5.5" fill="none" stroke="#777" stroke-width="0.9"/></svg>
<div class="b " style="left:659px;top:497px;width:5px;height:1.5px;background:#444;"></div>
<div class="b " style="left:668px;top:497px;width:75px;height:1px;background:#8a8a8a;"></div>
<div class="b " style="left:703px;top:492px;width:4px;height:11px;background:#444;"></div>
<div class="b " style="left:745px;top:497px;width:6px;height:1.5px;background:#444;"></div>
<div class="b " style="left:747.3px;top:494.7px;width:1.5px;height:6px;background:#444;"></div>
<span class="t" id="t89" style="font-size:10.5px;line-height:14.5px;color:#333;top:490.05px;font-weight:500;left:760.5px;transform-origin:0 50%;transform:scaleX(0.8935);">100%</span>
<div class="b " style="left:0px;top:0px;width:1px;height:506px;background:#858585;"></div>
<div class="b " style="left:799px;top:0px;width:1px;height:506px;background:#858585;"></div>
<div class="b " style="left:0px;top:0px;width:800px;height:1px;background:#8f8f8f;"></div>
<div class="b " style="left:352px;top:59.5px;width:401px;height:406.5px;background:#f0f0f0;border:1px solid #3c3c3c;box-sizing:border-box;"></div>
<div class="b " style="left:352px;top:59.5px;width:401px;height:23px;background:#2b2b2b;"></div>
<span class="t" id="t90" style="font-size:10.5px;line-height:14.5px;color:#fff;top:64.75px;font-weight:500;left:359px;transform-origin:0 50%;transform:scaleX(0.7959);">セルの書式設定</span>
<span class="t" id="t91" style="font-size:10.5px;line-height:14.5px;color:#fff;top:64.25px;font-weight:500;left:697.5px;transform-origin:0 50%;transform:scaleX(0.8556);">?</span>
<svg class="b" style="left:730px;top:66.5px;" width="9" height="9" viewBox="0 0 9 9"><path d="M0.8 0.8L8.2 8.2M8.2 0.8L0.8 8.2" stroke="#fff" stroke-width="1.2" fill="none"/></svg>
<div class="b " style="left:357px;top:107px;width:389px;height:324px;background:#fff;border:1px solid #d9d9d9;box-sizing:border-box;"></div>
<div class="b " style="left:357px;top:91px;width:50px;height:16px;background:#f0f0f0;border:1px solid #d9d9d9;box-sizing:border-box;border-bottom:none;"></div>
<div class="b " style="left:407px;top:91px;width:41px;height:16px;background:#f0f0f0;border:1px solid #d9d9d9;box-sizing:border-box;border-bottom:none;"></div>
<div class="b " style="left:448px;top:91px;width:41px;height:16px;background:#f0f0f0;border:1px solid #d9d9d9;box-sizing:border-box;border-bottom:none;"></div>
<div class="b " style="left:489px;top:91px;width:41px;height:16px;background:#f0f0f0;border:1px solid #d9d9d9;box-sizing:border-box;border-bottom:none;"></div>
<div class="b " style="left:529px;top:89px;width:54px;height:19px;background:#fff;border:1px solid #d9d9d9;box-sizing:border-box;border-bottom:none;"></div>
<div class="b " style="left:582px;top:91px;width:39px;height:16px;background:#f0f0f0;border:1px solid #d9d9d9;box-sizing:border-box;border-bottom:none;"></div>
<span class="t" id="t92" style="font-size:11px;line-height:15px;color:#000;top:92.5px;font-weight:500;left:364.5px;transform-origin:0 50%;transform:scaleX(0.8295);">表示形式</span>
<span class="t" id="t93" style="font-size:11px;line-height:15px;color:#000;top:92.5px;font-weight:500;left:418.5px;transform-origin:0 50%;transform:scaleX(0.8409);">配置</span>
<span class="t" id="t94" style="font-size:11px;line-height:15px;color:#000;top:92.5px;font-weight:500;left:455.5px;transform-origin:0 50%;transform:scaleX(0.6023);">フォント</span>
<span class="t" id="t95" style="font-size:11px;line-height:15px;color:#000;top:92.5px;font-weight:500;left:500.5px;transform-origin:0 50%;transform:scaleX(0.8409);">罫線</span>
<span class="t" id="t96" style="font-size:11px;line-height:15px;color:#000;top:91.5px;font-weight:500;left:537.5px;transform-origin:0 50%;transform:scaleX(0.6712);">塗りつぶし</span>
<span class="t" id="t97" style="font-size:11px;line-height:15px;color:#000;top:92.5px;font-weight:500;left:592px;transform-origin:0 50%;transform:scaleX(0.8409);">保護</span>
<span class="t" id="t98" style="font-size:11px;line-height:15px;color:#000;top:114.8px;font-weight:500;left:370px;transform-origin:0 50%;transform:scaleX(0.8364);">背景色</span>
<span class="t" id="t99" style="font-size:10.5px;line-height:14.5px;color:#000;top:115.05px;font-weight:500;left:397.8px;transform-origin:0 50%;transform:scaleX(0.9477);">(<u>C</u>):</span>
<div class="b " style="left:372px;top:132px;width:137px;height:18px;background:#e5f1fb;border:1px solid #cce4f7;box-sizing:border-box;"></div>
<div class="b " style="left:373.5px;top:133.5px;width:134px;height:15px;background:#e5f1fb;border:1px solid #adadad;box-sizing:border-box;"></div>
<span class="t" id="t100" style="font-size:11px;line-height:15px;color:#000;top:134.3px;font-weight:500;left:440px;transform-origin:0 50%;transform:translateX(-50%) scaleX(0.7273);transform-origin:50% 50%;">色なし</span>
<div class="b " style="left:374px;top:156.1px;width:9.3px;height:9.3px;background:#FFFFFF;border:1px solid rgba(110,110,110,.8);box-sizing:border-box;"></div>
<div class="b " style="left:387.77px;top:156.1px;width:9.3px;height:9.3px;background:#000000;border:1px solid rgba(110,110,110,.8);box-sizing:border-box;"></div>
<div class="b " style="left:401.54px;top:156.1px;width:9.3px;height:9.3px;background:#E7E6E6;border:1px solid rgba(110,110,110,.8);box-sizing:border-box;"></div>
<div class="b " style="left:415.31px;top:156.1px;width:9.3px;height:9.3px;background:#44546A;border:1px solid rgba(110,110,110,.8);box-sizing:border-box;"></div>
<div class="b " style="left:429.08px;top:156.1px;width:9.3px;height:9.3px;background:#4472C4;border:1px solid rgba(110,110,110,.8);box-sizing:border-box;"></div>
<div class="b " style="left:442.85px;top:156.1px;width:9.3px;height:9.3px;background:#ED7D31;border:1px solid rgba(110,110,110,.8);box-sizing:border-box;"></div>
<div class="b " style="left:456.62px;top:156.1px;width:9.3px;height:9.3px;background:#A5A5A5;border:1px solid rgba(110,110,110,.8);box-sizing:border-box;"></div>
<div class="b " style="left:470.39px;top:156.1px;width:9.3px;height:9.3px;background:#FFC000;border:1px solid rgba(110,110,110,.8);box-sizing:border-box;"></div>
<div class="b " style="left:484.16px;top:156.1px;width:9.3px;height:9.3px;background:#5B9BD5;border:1px solid rgba(110,110,110,.8);box-sizing:border-box;"></div>
<div class="b " style="left:497.93px;top:156.1px;width:9.3px;height:9.3px;background:#70AD47;border:1px solid rgba(110,110,110,.8);box-sizing:border-box;"></div>
<div class="b " style="left:374px;top:177.4px;width:9.3px;height:9.3px;background:#F2F2F2;border:1px solid rgba(110,110,110,.8);box-sizing:border-box;"></div>
<div class="b " style="left:387.77px;top:177.4px;width:9.3px;height:9.3px;background:#7F7F7F;border:1px solid rgba(110,110,110,.8);box-sizing:border-box;"></div>
<div class="b " style="left:401.54px;top:177.4px;width:9.3px;height:9.3px;background:#D0CECE;border:1px solid rgba(110,110,110,.8);box-sizing:border-box;"></div>
<div class="b " style="left:415.31px;top:177.4px;width:9.3px;height:9.3px;background:#D6DCE4;border:1px solid rgba(110,110,110,.8);box-sizing:border-box;"></div>
<div class="b " style="left:429.08px;top:177.4px;width:9.3px;height:9.3px;background:#D9E1F2;border:1px solid rgba(110,110,110,.8);box-sizing:border-box;"></div>
<div class="b " style="left:442.85px;top:177.4px;width:9.3px;height:9.3px;background:#FCE4D6;border:1px solid rgba(110,110,110,.8);box-sizing:border-box;"></div>
<div class="b " style="left:456.62px;top:177.4px;width:9.3px;height:9.3px;background:#EDEDED;border:1px solid rgba(110,110,110,.8);box-sizing:border-box;"></div>
<div class="b " style="left:470.39px;top:177.4px;width:9.3px;height:9.3px;background:#FFF2CC;border:1px solid rgba(110,110,110,.8);box-sizing:border-box;"></div>
<div class="b " style="left:481.66px;top:174.9px;width:14.3px;height:14.3px;background:#e5f1fb;border:1px solid #8cc7f2;box-sizing:border-box;"></div>
<div class="b " style="left:484.16px;top:177.4px;width:9.3px;height:9.3px;background:#DDEBF7;border:1px solid rgba(110,110,110,.8);box-sizing:border-box;"></div>
<div class="b " style="left:497.93px;top:177.4px;width:9.3px;height:9.3px;background:#E2EFDA;border:1px solid rgba(110,110,110,.8);box-sizing:border-box;"></div>
<div class="b " style="left:374px;top:190.3px;width:9.3px;height:9.3px;background:#D9D9D9;border:1px solid rgba(110,110,110,.8);box-sizing:border-box;"></div>
<div class="b " style="left:387.77px;top:190.3px;width:9.3px;height:9.3px;background:#595959;border:1px solid rgba(110,110,110,.8);box-sizing:border-box;"></div>
<div class="b " style="left:401.54px;top:190.3px;width:9.3px;height:9.3px;background:#AEAAAA;border:1px solid rgba(110,110,110,.8);box-sizing:border-box;"></div>
<div class="b " style="left:415.31px;top:190.3px;width:9.3px;height:9.3px;background:#ACB9CA;border:1px solid rgba(110,110,110,.8);box-sizing:border-box;"></div>
<div class="b " style="left:429.08px;top:190.3px;width:9.3px;height:9.3px;background:#B4C6E7;border:1px solid rgba(110,110,110,.8);box-sizing:border-box;"></div>
<div class="b " style="left:442.85px;top:190.3px;width:9.3px;height:9.3px;background:#F8CBAD;border:1px solid rgba(110,110,110,.8);box-sizing:border-box;"></div>
<div class="b " style="left:456.62px;top:190.3px;width:9.3px;height:9.3px;background:#DBDBDB;border:1px solid rgba(110,110,110,.8);box-sizing:border-box;"></div>
<div class="b " style="left:470.39px;top:190.3px;width:9.3px;height:9.3px;background:#FFE699;border:1px solid rgba(110,110,110,.8);box-sizing:border-box;"></div>
<div class="b " style="left:484.16px;top:190.3px;width:9.3px;height:9.3px;background:#BDD7EE;border:1px solid rgba(110,110,110,.8);box-sizing:border-box;"></div>
<div class="b " style="left:497.93px;top:190.3px;width:9.3px;height:9.3px;background:#C6E0B4;border:1px solid rgba(110,110,110,.8);box-sizing:border-box;"></div>
<div class="b " style="left:374px;top:203.5px;width:9.3px;height:9.3px;background:#BFBFBF;border:1px solid rgba(110,110,110,.8);box-sizing:border-box;"></div>
<div class="b " style="left:387.77px;top:203.5px;width:9.3px;height:9.3px;background:#404040;border:1px solid rgba(110,110,110,.8);box-sizing:border-box;"></div>
<div class="b " style="left:401.54px;top:203.5px;width:9.3px;height:9.3px;background:#757171;border:1px solid rgba(110,110,110,.8);box-sizing:border-box;"></div>
<div class="b " style="left:415.31px;top:203.5px;width:9.3px;height:9.3px;background:#8497B0;border:1px solid rgba(110,110,110,.8);box-sizing:border-box;"></div>
<div class="b " style="left:429.08px;top:203.5px;width:9.3px;height:9.3px;background:#8EA9DB;border:1px solid rgba(110,110,110,.8);box-sizing:border-box;"></div>
<div class="b " style="left:442.85px;top:203.5px;width:9.3px;height:9.3px;background:#F4B084;border:1px solid rgba(110,110,110,.8);box-sizing:border-box;"></div>
<div class="b " style="left:456.62px;top:203.5px;width:9.3px;height:9.3px;background:#C9C9C9;border:1px solid rgba(110,110,110,.8);box-sizing:border-box;"></div>
<div class="b " style="left:470.39px;top:203.5px;width:9.3px;height:9.3px;background:#FFD966;border:1px solid rgba(110,110,110,.8);box-sizing:border-box;"></div>
<div class="b " style="left:484.16px;top:203.5px;width:9.3px;height:9.3px;background:#9BC2E6;border:1px solid rgba(110,110,110,.8);box-sizing:border-box;"></div>
<div class="b " style="left:497.93px;top:203.5px;width:9.3px;height:9.3px;background:#A9D08E;border:1px solid rgba(110,110,110,.8);box-sizing:border-box;"></div>
<div class="b " style="left:374px;top:216.5px;width:9.3px;height:9.3px;background:#A6A6A6;border:1px solid rgba(110,110,110,.8);box-sizing:border-box;"></div>
<div class="b " style="left:387.77px;top:216.5px;width:9.3px;height:9.3px;background:#262626;border:1px solid rgba(110,110,110,.8);box-sizing:border-box;"></div>
<div class="b " style="left:401.54px;top:216.5px;width:9.3px;height:9.3px;background:#3A3838;border:1px solid rgba(110,110,110,.8);box-sizing:border-box;"></div>
<div class="b " style="left:415.31px;top:216.5px;width:9.3px;height:9.3px;background:#333F4F;border:1px solid rgba(110,110,110,.8);box-sizing:border-box;"></div>
<div class="b " style="left:429.08px;top:216.5px;width:9.3px;height:9.3px;background:#305496;border:1px solid rgba(110,110,110,.8);box-sizing:border-box;"></div>
<div class="b " style="left:442.85px;top:216.5px;width:9.3px;height:9.3px;background:#C65911;border:1px solid rgba(110,110,110,.8);box-sizing:border-box;"></div>
<div class="b " style="left:456.62px;top:216.5px;width:9.3px;height:9.3px;background:#7B7B7B;border:1px solid rgba(110,110,110,.8);box-sizing:border-box;"></div>
<div class="b " style="left:470.39px;top:216.5px;width:9.3px;height:9.3px;background:#BF8F00;border:1px solid rgba(110,110,110,.8);box-sizing:border-box;"></div>
<div class="b " style="left:484.16px;top:216.5px;width:9.3px;height:9.3px;background:#2F75B5;border:1px solid rgba(110,110,110,.8);box-sizing:border-box;"></div>
<div class="b " style="left:497.93px;top:216.5px;width:9.3px;height:9.3px;background:#548235;border:1px solid rgba(110,110,110,.8);box-sizing:border-box;"></div>
<div class="b " style="left:374px;top:229.4px;width:9.3px;height:9.3px;background:#808080;border:1px solid rgba(110,110,110,.8);box-sizing:border-box;"></div>
<div class="b " style="left:387.77px;top:229.4px;width:9.3px;height:9.3px;background:#0D0D0D;border:1px solid rgba(110,110,110,.8);box-sizing:border-box;"></div>
<div class="b " style="left:401.54px;top:229.4px;width:9.3px;height:9.3px;background:#161616;border:1px solid rgba(110,110,110,.8);box-sizing:border-box;"></div>
<div class="b " style="left:415.31px;top:229.4px;width:9.3px;height:9.3px;background:#222B35;border:1px solid rgba(110,110,110,.8);box-sizing:border-box;"></div>
<div class="b " style="left:429.08px;top:229.4px;width:9.3px;height:9.3px;background:#203764;border:1px solid rgba(110,110,110,.8);box-sizing:border-box;"></div>
<div class="b " style="left:442.85px;top:229.4px;width:9.3px;height:9.3px;background:#833C0B;border:1px solid rgba(110,110,110,.8);box-sizing:border-box;"></div>
<div class="b " style="left:456.62px;top:229.4px;width:9.3px;height:9.3px;background:#525252;border:1px solid rgba(110,110,110,.8);box-sizing:border-box;"></div>
<div class="b " style="left:470.39px;top:229.4px;width:9.3px;height:9.3px;background:#806000;border:1px solid rgba(110,110,110,.8);box-sizing:border-box;"></div>
<div class="b " style="left:484.16px;top:229.4px;width:9.3px;height:9.3px;background:#1F4E78;border:1px solid rgba(110,110,110,.8);box-sizing:border-box;"></div>
<div class="b " style="left:497.93px;top:229.4px;width:9.3px;height:9.3px;background:#375623;border:1px solid rgba(110,110,110,.8);box-sizing:border-box;"></div>
<div class="b " style="left:374px;top:250.4px;width:9.3px;height:9.3px;background:#C00000;border:1px solid rgba(0,0,0,.22);box-sizing:border-box;"></div>
<div class="b " style="left:387.77px;top:250.4px;width:9.3px;height:9.3px;background:#FF0000;border:1px solid rgba(0,0,0,.22);box-sizing:border-box;"></div>
<div class="b " style="left:401.54px;top:250.4px;width:9.3px;height:9.3px;background:#FFC000;border:1px solid rgba(0,0,0,.22);box-sizing:border-box;"></div>
<div class="b " style="left:415.31px;top:250.4px;width:9.3px;height:9.3px;background:#FFFF00;border:1px solid rgba(0,0,0,.22);box-sizing:border-box;"></div>
<div class="b " style="left:429.08px;top:250.4px;width:9.3px;height:9.3px;background:#92D050;border:1px solid rgba(0,0,0,.22);box-sizing:border-box;"></div>
<div class="b " style="left:442.85px;top:250.4px;width:9.3px;height:9.3px;background:#00B050;border:1px solid rgba(0,0,0,.22);box-sizing:border-box;"></div>
<div class="b " style="left:456.62px;top:250.4px;width:9.3px;height:9.3px;background:#00B0F0;border:1px solid rgba(0,0,0,.22);box-sizing:border-box;"></div>
<div class="b " style="left:470.39px;top:250.4px;width:9.3px;height:9.3px;background:#0070C0;border:1px solid rgba(0,0,0,.22);box-sizing:border-box;"></div>
<div class="b " style="left:484.16px;top:250.4px;width:9.3px;height:9.3px;background:#002060;border:1px solid rgba(0,0,0,.22);box-sizing:border-box;"></div>
<div class="b " style="left:497.93px;top:250.4px;width:9.3px;height:9.3px;background:#7030A0;border:1px solid rgba(0,0,0,.22);box-sizing:border-box;"></div>
<div class="b " style="left:370px;top:170.5px;width:140px;height:1px;background:#cfcfcf;"></div>
<div class="b " style="left:370px;top:244.3px;width:140px;height:1px;background:#cfcfcf;"></div>
<div class="b " style="left:370.5px;top:273.5px;width:87.5px;height:19px;background:#e1e1e1;border:1px solid #adadad;box-sizing:border-box;"></div>
<span class="t" id="t101" style="font-size:11px;line-height:15px;color:#000;top:276px;font-weight:500;left:376.2px;transform-origin:0 50%;transform:scaleX(0.7066);">塗りつぶし効果</span>
<span class="t" id="t102" style="font-size:10.5px;line-height:14.5px;color:#000;top:276.25px;font-weight:500;left:431px;transform-origin:0 50%;transform:scaleX(1.0711);">(<u>I</u>)...</span>
<div class="b " style="left:466px;top:273.5px;width:78px;height:19px;background:#e1e1e1;border:1px solid #adadad;box-sizing:border-box;"></div>
<span class="t" id="t103" style="font-size:11px;line-height:15px;color:#000;top:276px;font-weight:500;left:472.5px;transform-origin:0 50%;transform:scaleX(0.6818);">その他の色</span>
<span class="t" id="t104" style="font-size:10.5px;line-height:14.5px;color:#000;top:276.25px;font-weight:500;left:510.2px;transform-origin:0 50%;transform:scaleX(1.0939);">(<u>M</u>)...</span>
<div class="b " style="left:626px;top:439px;width:57px;height:19px;background:#e1e1e1;border:2px solid #0078d7;box-sizing:border-box;"></div>
<span class="t" id="t105" style="font-size:11px;line-height:15px;color:#000;top:441.3px;font-weight:500;left:654.5px;transform-origin:0 50%;transform:translateX(-50%) scaleX(0.9116);transform-origin:50% 50%;">OK</span>
<div class="b " style="left:690px;top:439px;width:57px;height:19px;background:#e1e1e1;border:1px solid #adadad;box-sizing:border-box;"></div>
<span class="t" id="t106" style="font-size:11px;line-height:15px;color:#000;top:441.3px;font-weight:500;left:718.5px;transform-origin:0 50%;transform:translateX(-50%) scaleX(0.6364);transform-origin:50% 50%;">キャンセル</span>
<span class="t" id="t107" style="font-size:11px;line-height:15px;color:#000;top:114.8px;font-weight:500;left:559px;transform-origin:0 50%;transform:scaleX(0.6875);">パターンの色</span>
<span class="t" id="t108" style="font-size:10.5px;line-height:14.5px;color:#000;top:115.05px;font-weight:500;left:604.2px;transform-origin:0 50%;transform:scaleX(0.9919);">(<u>A</u>):</span>
<div class="b " style="left:559px;top:130px;width:133px;height:20px;background:#fff;border:1px solid #adadad;box-sizing:border-box;"></div>
<div class="b " style="left:679px;top:131px;width:12px;height:18px;background:#e1e1e1;border-left:1px solid #adadad;box-sizing:border-box;"></div>
<svg class="b" style="left:681.5px;top:138px;" width="8" height="5" viewBox="0 0 8 5"><path d="M0.8 0.8L4 4L7.2 0.8" stroke="#444" stroke-width="1" fill="none"/></svg>
<span class="t" id="t109" style="font-size:11px;line-height:15px;color:#000;top:132.5px;font-weight:500;left:619px;transform-origin:0 50%;transform:translateX(-50%) scaleX(0.8864);transform-origin:50% 50%;">自動</span>
<span class="t" id="t110" style="font-size:11px;line-height:15px;color:#000;top:152.5px;font-weight:500;left:559px;transform-origin:0 50%;transform:scaleX(0.7142);">パターンの種類</span>
<span class="t" id="t111" style="font-size:10.5px;line-height:14.5px;color:#000;top:152.75px;font-weight:500;left:613.8px;transform-origin:0 50%;transform:scaleX(0.9092);">(<u>P</u>):</span>
<div class="b " style="left:559px;top:168px;width:133px;height:20px;background:#fff;border:1px solid #adadad;box-sizing:border-box;"></div>
<div class="b " style="left:679px;top:169px;width:12px;height:18px;background:#e1e1e1;border-left:1px solid #adadad;box-sizing:border-box;"></div>
<svg class="b" style="left:681.5px;top:176px;" width="8" height="5" viewBox="0 0 8 5"><path d="M0.8 0.8L4 4L7.2 0.8" stroke="#444" stroke-width="1" fill="none"/></svg>
<div class="b " style="left:364px;top:364.5px;width:376px;height:59px;border:1px solid #dcdcdc;box-sizing:border-box;"></div>
<div class="b " style="left:367px;top:360px;width:31px;height:11px;background:#fff;"></div>
<span class="t" id="t112" style="font-size:11px;line-height:15px;color:#000;top:357.5px;font-weight:500;left:368.5px;transform-origin:0 50%;transform:scaleX(0.6526);">サンプル</span>
<div class="b " style="left:372.5px;top:378px;width:359px;height:38.5px;background:#DDEBF7;"></div>
</div></body></html>
